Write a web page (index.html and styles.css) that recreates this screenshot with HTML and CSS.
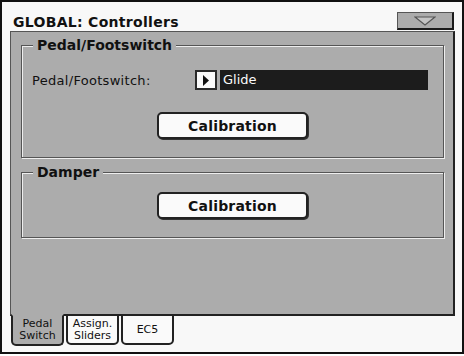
FILE: index.html
```html
<!DOCTYPE html>
<html lang="en">
<head>
    <meta charset="UTF-8">
    <title>GLOBAL: Controllers</title>
    <link rel="stylesheet" href="styles.css">
</head>
<body>
    <div class="screen">
        <!-- Cabecera -->
        <div class="header">
            <h1 class="title">GLOBAL: Controllers</h1>
            <button class="menu-btn" aria-label="Menu">
                <svg width="22" height="10" viewBox="0 0 22 10">
                    <polygon points="1,1 21,1 11,9" fill="#c4c4c4" stroke="#555" stroke-width="1.2"/>
                </svg>
            </button>
        </div>

        <!-- Panel -->
        <div class="panel">
            <div class="group">
                <h2 class="group-title">Pedal/Footswitch</h2>
                <div class="param-row">
                    <span class="param-label">Pedal/Footswitch:</span>
                    <span class="pop-arrow">
                        <svg width="8" height="11" viewBox="0 0 8 11"><polygon points="1,0 7,5.5 1,11" fill="#111"/></svg>
                    </span>
                    <span class="param-value">Glide</span>
                </div>
                <button class="calib-btn">Calibration</button>
            </div>

            <div class="group group-damper">
                <h2 class="group-title">Damper</h2>
                <button class="calib-btn">Calibration</button>
            </div>
        </div>

        <!-- Pestañas -->
        <div class="tabs">
            <div class="tab active">Pedal<br>Switch</div>
            <div class="tab">Assign.<br>Sliders</div>
            <div class="tab">EC5</div>
        </div>
    </div>
</body>
</html>
```

FILE: styles.css
```css
body {
    margin: 0;
    font-family: "DejaVu Sans", sans-serif;
    color: #111;
}
.screen {
    width: 464px;
    height: 354px;
    box-sizing: border-box;
    border: 2px solid #111;
    background-color: #f8f8f8;
    display: flex;
    flex-direction: column;
}
.header {
    height: 29px;
    display: flex;
    align-items: flex-start;
    justify-content: space-between;
    flex-shrink: 0;
}
.title {
    margin: 12px 0 0 11px;
    font-size: 14px;
    line-height: 16px;
    font-weight: bold;
    letter-spacing: 0.3px;
}
.menu-btn {
    margin: 10px 8px 0 0;
    width: 57px;
    height: 18px;
    padding: 0;
    box-sizing: border-box;
    background-color: #acacac;
    border-top: 1px solid #555;
    border-left: 1px solid #555;
    border-right: 2px solid #1a1a1a;
    border-bottom: 2px solid #1a1a1a;
    display: flex;
    align-items: center;
    justify-content: center;
}
.panel {
    margin: 0 7px 0 8px;
    height: 285px;
    box-sizing: border-box;
    flex-shrink: 0;
    background-color: #acacac;
    border-top: 1px solid #555;
    border-left: 1px solid #555;
    border-right: 2px solid #222;
    border-bottom: 2px solid #222;
    padding-top: 13px;
}
.group {
    margin: 0 9px 0 10px;
    border: 1px solid #555;
    box-shadow: 1px 1px 0 #eee, inset 1px 1px 0 #eee;
    padding: 0 10px 18px 10px;
}
.group-damper {
    margin-top: 14px;
    padding-bottom: 18px;
}
.group-title {
    display: block;
    width: fit-content;
    margin: -9px 0 0 1px;
    padding: 0 4px;
    background-color: #acacac;
    font-size: 14px;
    line-height: 16px;
    font-weight: bold;
}
.param-row {
    display: flex;
    align-items: center;
    margin-top: 17px;
    height: 20px;
}
.param-label {
    width: 163px;
    font-size: 13px;
    letter-spacing: 0.3px;
}
.pop-arrow {
    width: 22px;
    height: 20px;
    box-sizing: border-box;
    border: 2px solid #2a2a2a;
    background-color: #fafafa;
    display: flex;
    align-items: center;
    justify-content: center;
}
.param-value {
    margin-left: 3px;
    width: 208px;
    height: 20px;
    box-sizing: border-box;
    padding-left: 3px;
    background-color: #1c1c1c;
    color: #fafafa;
    font-size: 13px;
    line-height: 20px;
}
.calib-btn {
    display: block;
    margin: 22px 0 0 125px;
    width: 151px;
    height: 27px;
    box-sizing: border-box;
    background-color: #fafafa;
    border: 2px solid #222;
    border-radius: 5px;
    box-shadow: 1px 1px 0 #333;
    font-family: "DejaVu Sans", sans-serif;
    font-size: 14px;
    font-weight: bold;
    color: #111;
    letter-spacing: 0.2px;
    padding: 0;
}
.group-damper .calib-btn {
    margin-top: 12px;
}
.tabs {
    display: flex;
    gap: 2px;
    margin: -2px 0 0 9px;
}
.tab {
    width: 53px;
    height: 31px;
    box-sizing: border-box;
    border: 2px solid #222;
    border-radius: 0 0 5px 5px;
    background-color: #fafafa;
    font-size: 11px;
    line-height: 12px;
    text-align: center;
    display: flex;
    align-items: center;
    justify-content: center;
}
.tab.active {
    background-color: #acacac;
    border-top-color: #acacac;
    height: 32px;
}
```
